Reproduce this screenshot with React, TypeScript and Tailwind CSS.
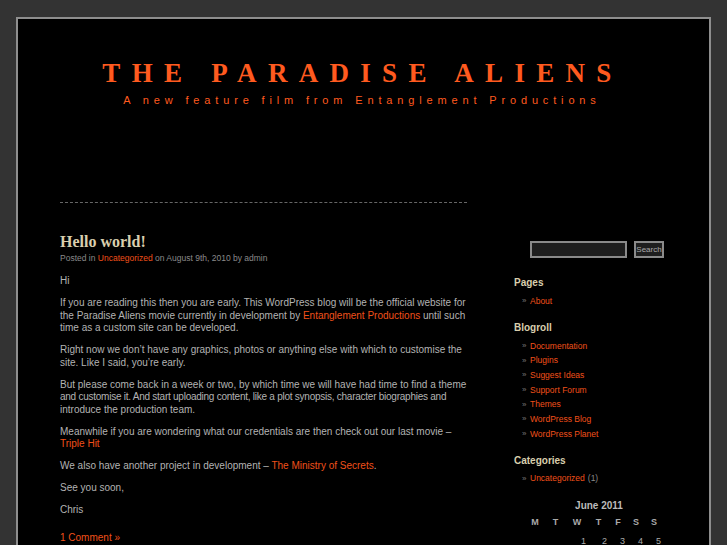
const serif = { fontFamily: '"Liberation Serif", "Times New Roman", serif' };

const blogroll = [
  'Documentation',
  'Plugins',
  'Suggest Ideas',
  'Support Forum',
  'Themes',
  'WordPress Blog',
  'WordPress Planet',
];

const days = ['M', 'T', 'W', 'T', 'F', 'S', 'S'];
const firstWeek = ['', '', '1', '2', '3', '4', '5'];

function Link({ children }: { children: React.ReactNode }) {
  return <span className="text-[#f0501a]">{children}</span>;
}

function SideItem({ children }: { children: React.ReactNode }) {
  return (
    <li className="flex items-center h-[14.7px]">
      <span className="text-[8px] text-[#777] w-[16px] pl-[8px]">»</span>
      {children}
    </li>
  );
}

function SideHeading({ children }: { children: React.ReactNode }) {
  return <h2 className="text-[10px] font-bold text-[#d9cfae] leading-[14px] mb-[4px]">{children}</h2>;
}

export default function App() {
  return (
    <div
      className="min-h-screen bg-[#333333] pt-[17px] px-[16px] overflow-hidden"
      style={{ fontFamily: '"Liberation Sans", Arial, sans-serif' }}
    >
      <div className="border-2 border-[#8e8e8e] bg-black min-h-[600px]">
        {/* header */}
        <div className="h-[183px] pt-[41px] text-center">
          <h1
            className="text-[27px] font-bold leading-[27px] text-[#ff5a1f] tracking-[11.3px] pr-[2px]"
            style={serif}
          >
            THE PARADISE ALIENS
          </h1>
          <p className="mt-[7px] text-[11px] leading-[13px] text-[#ff5a1f] tracking-[4.85px] pr-[3px]">
            A new feature film from Entanglement Productions
          </p>
        </div>

        <div className="flex">
          {/* main column */}
          <div className="ml-[42px] w-[407px] shrink-0 border-t border-dashed border-[#666] text-[10px] leading-[12.5px] text-[#b3b3b3]">
            <h2 className="mt-[29px] text-[16px] font-bold leading-[20px] text-[#d9cfae]" style={serif}>
              Hello world!
            </h2>
            <p className="text-[8.5px] leading-[12px] text-[#8a8a8a]">
              Posted in <Link>Uncategorized</Link> on August 9th, 2010 by admin
            </p>
            <div className="mt-[11px] space-y-[9.5px] whitespace-nowrap">
              <p>Hi</p>
              <p>
                If you are reading this then you are early. This WordPress blog will be the official website for
                <br />
                the Paradise Aliens movie currently in development by <Link>Entanglement Productions</Link> until such
                <br />
                time as a custom site can be developed.
              </p>
              <p>
                Right now we don’t have any graphics, photos or anything else with which to customise the
                <br />
                site. Like I said, you’re early.
              </p>
              <p>
                But please come back in a week or two, by which time we will have had time to find a theme
                <br />
                <span className="tracking-[-0.25px]">
                  and customise it. And start uploading content, like a plot synopsis, character biographies and
                </span>
                <br />
                introduce the production team.
              </p>
              <p>
                Meanwhile if you are wondering what our credentials are then check out our last movie –
                <br />
                <Link>Triple Hit</Link>
              </p>
              <p>
                We also have another project in development – <Link>The Ministry of Secrets</Link>.
              </p>
              <p>See you soon,</p>
              <p>Chris</p>
            </div>
            <p className="mt-[15px] text-[#f0501a]">1 Comment »</p>
          </div>

          {/* sidebar */}
          <div className="ml-[47px] w-[190px] pt-[39px] text-[8.5px] text-[#f0501a]">
            <div className="flex items-center gap-[7px] pl-[16px]">
              <div className="w-[97px] h-[17px] border-2 border-[#8a8a8a] bg-[#1e1e1e]" />
              <button className="h-[17px] w-[30px] border-2 border-[#8a8a8a] bg-[#1e1e1e] text-[8px] text-[#aaa] leading-none overflow-hidden whitespace-nowrap">
                Search
              </button>
            </div>

            <div className="mt-[18px]">
              <SideHeading>Pages</SideHeading>
              <ul>
                <SideItem>About</SideItem>
              </ul>
            </div>

            <div className="mt-[12px]">
              <SideHeading>Blogroll</SideHeading>
              <ul>
                {blogroll.map((b) => (
                  <SideItem key={b}>{b}</SideItem>
                ))}
              </ul>
            </div>

            <div className="mt-[12px]">
              <SideHeading>Categories</SideHeading>
              <ul>
                <SideItem>
                  Uncategorized <span className="text-[#888] ml-[3px]">(1)</span>
                </SideItem>
              </ul>
            </div>

            <div className="mt-[14px] ml-[11px] text-[#aaa]">
              <div className="pl-[10px] w-[138px] text-center text-[10px] font-bold leading-[12px] text-[#bbb]">
                June 2011
              </div>
              <div className="grid grid-cols-[20px_21px_22px_21px_18px_18px_18px] mt-[4px] text-[9px] font-bold leading-[12px]">
                {days.map((d, i) => (
                  <div key={i} className="text-center">
                    {d}
                  </div>
                ))}
              </div>
              <div className="grid grid-cols-[20px_21px_22px_21px_18px_18px_18px] mt-[7px] text-[9px] leading-[12px]">
                {firstWeek.map((d, i) => (
                  <div key={i} className="text-right pr-[2px]">
                    {d}
                  </div>
                ))}
              </div>
            </div>
          </div>
        </div>
      </div>
    </div>
  );
}
